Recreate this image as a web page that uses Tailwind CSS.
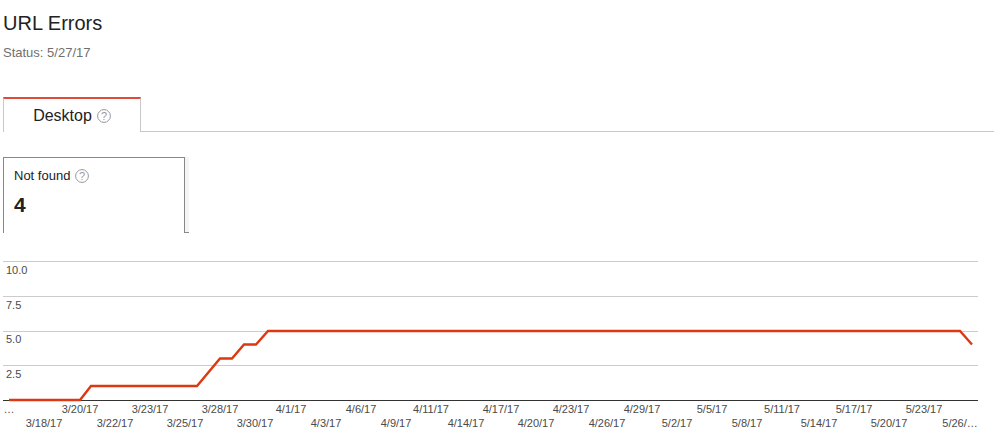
<!DOCTYPE html>
<html lang="en">
<head>
    <meta charset="UTF-8">
    <title>URL Errors</title>
    <script src="https://cdn.jsdelivr.net/npm/@tailwindcss/browser@4"></script>
</head>
<body class="bg-white font-['Liberation_Sans',Arial,sans-serif] w-[1000px] h-[444px] overflow-hidden">
    <div class="pl-[3px] pt-[11px]">
        <h1 class="text-[20px] leading-[24px] text-[#222]">URL Errors</h1>
        <p class="mt-[10px] text-[13px] leading-[16px] text-[#6f6f6f]">Status: 5/27/17</p>

        <!-- tabs -->
        <div class="mt-[36px] flex h-[35px] w-[991px] border-b border-[#c8c8c8]">
            <div class="flex h-[35px] w-[138px] items-center justify-center gap-[5px] border-x border-[#c8c8c8] border-t-2 border-t-[#dd4b39] bg-white text-[16px] text-[#222]">
                Desktop
                <svg class="w-[14px] h-[14px]" viewBox="0 0 14 14" fill="none">
                    <circle cx="7" cy="7" r="6.4" stroke="#999"/>
                    <text x="7" y="10.8" text-anchor="middle" font-size="11" fill="#999">?</text>
                </svg>
            </div>
        </div>

        <!-- not found card -->
        <div class="mt-[25px] flex h-[76px] w-[186px]">
            <div class="w-[182px] border-x border-t border-[#888] pl-[10px] pt-[10px]">
                <div class="flex items-center gap-[5px] text-[13px] leading-[16px] text-[#222]">
                    Not found
                    <svg class="w-[14px] h-[14px]" viewBox="0 0 14 14" fill="none">
                        <circle cx="7" cy="7" r="6.4" stroke="#999"/>
                        <text x="7" y="10.8" text-anchor="middle" font-size="11" fill="#999">?</text>
                    </svg>
                </div>
                <div class="mt-[9px] text-[21px] leading-[24px] font-bold text-[#222]">4</div>
            </div>
            <div class="w-[4px] bg-[#f5f5f5] border-b border-[#888]"></div>
        </div>
    </div>

    <!-- chart -->
    <svg class="mt-[21px] block" width="1000" height="190" viewBox="0 254 1000 190" font-size="11" fill="#4a4a4a">
        <g stroke="#ccc">
            <line x1="3" x2="978" y1="261.5" y2="261.5"/>
            <line x1="3" x2="978" y1="296.5" y2="296.5"/>
            <line x1="3" x2="978" y1="331.5" y2="331.5"/>
            <line x1="3" x2="978" y1="365.5" y2="365.5"/>
        </g>
        <line x1="3" x2="978" y1="400.5" y2="400.5" stroke="#333"/>
        <polyline fill="none" stroke="#dc3912" stroke-width="2.4"
            points="9,400 80,400 91,386 197,386 220,358.5 232,358.5 244,344.5 256,344.5 268,331 960,331 972,344.5"/>
        <g>
            <text x="6" y="274">10.0</text>
            <text x="6" y="309">7.5</text>
            <text x="6" y="343">5.0</text>
            <text x="6" y="378">2.5</text>
        </g>
        <g text-anchor="middle">
            <text x="9" y="413">…</text>
            <text x="80" y="413">3/20/17</text>
            <text x="150" y="413">3/23/17</text>
            <text x="220" y="413">3/28/17</text>
            <text x="291" y="413">4/1/17</text>
            <text x="361" y="413">4/6/17</text>
            <text x="431" y="413">4/11/17</text>
            <text x="501" y="413">4/17/17</text>
            <text x="571" y="413">4/23/17</text>
            <text x="642" y="413">4/29/17</text>
            <text x="712" y="413">5/5/17</text>
            <text x="782" y="413">5/11/17</text>
            <text x="854" y="413">5/17/17</text>
            <text x="924" y="413">5/23/17</text>
            <text x="44" y="427">3/18/17</text>
            <text x="115" y="427">3/22/17</text>
            <text x="185" y="427">3/25/17</text>
            <text x="255" y="427">3/30/17</text>
            <text x="326" y="427">4/3/17</text>
            <text x="396" y="427">4/9/17</text>
            <text x="466" y="427">4/14/17</text>
            <text x="536" y="427">4/20/17</text>
            <text x="607" y="427">4/26/17</text>
            <text x="677" y="427">5/2/17</text>
            <text x="747" y="427">5/8/17</text>
            <text x="819" y="427">5/14/17</text>
            <text x="889" y="427">5/20/17</text>
            <text x="960" y="427">5/26/…</text>
        </g>
    </svg>
</body>
</html>
